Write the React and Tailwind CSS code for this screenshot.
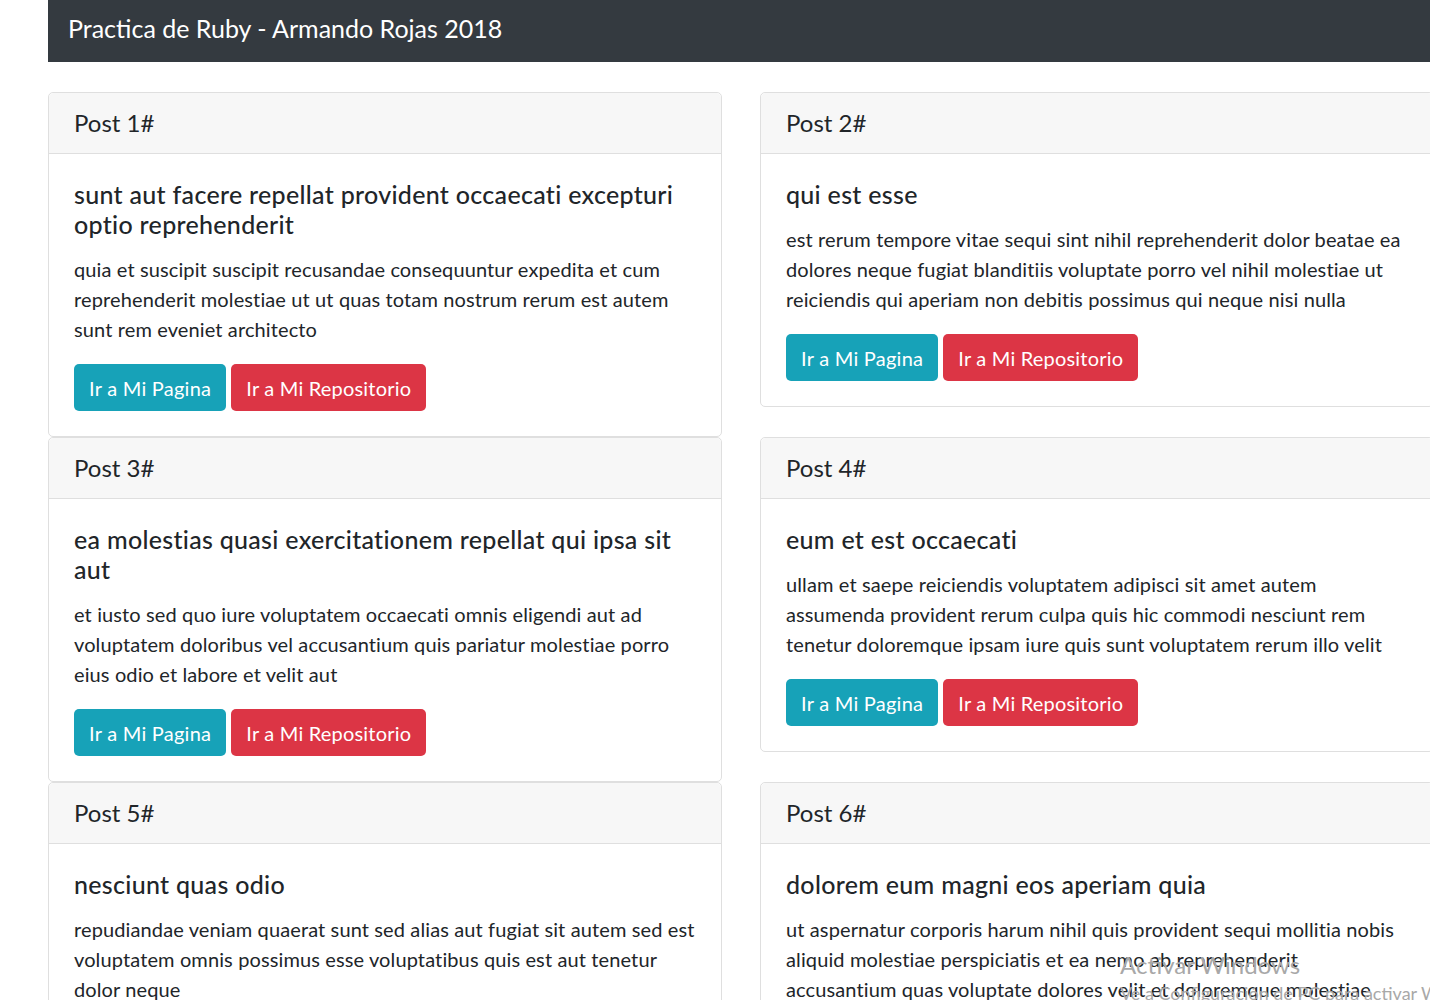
import React from "react";

const posts = [
  {
    id: 1,
    title: "sunt aut facere repellat provident occaecati excepturi optio reprehenderit",
    body: "quia et suscipit suscipit recusandae consequuntur expedita et cum reprehenderit molestiae ut ut quas totam nostrum rerum est autem sunt rem eveniet architecto",
  },
  {
    id: 2,
    title: "qui est esse",
    body: "est rerum tempore vitae sequi sint nihil reprehenderit dolor beatae ea dolores neque fugiat blanditiis voluptate porro vel nihil molestiae ut reiciendis qui aperiam non debitis possimus qui neque nisi nulla",
  },
  {
    id: 3,
    title: "ea molestias quasi exercitationem repellat qui ipsa sit aut",
    body: "et iusto sed quo iure voluptatem occaecati omnis eligendi aut ad voluptatem doloribus vel accusantium quis pariatur molestiae porro eius odio et labore et velit aut",
  },
  {
    id: 4,
    title: "eum et est occaecati",
    body: "ullam et saepe reiciendis voluptatem adipisci sit amet autem assumenda provident rerum culpa quis hic commodi nesciunt rem tenetur doloremque ipsam iure quis sunt voluptatem rerum illo velit",
  },
  {
    id: 5,
    title: "nesciunt quas odio",
    body: "repudiandae veniam quaerat sunt sed alias aut fugiat sit autem sed est voluptatem omnis possimus esse voluptatibus quis est aut tenetur dolor neque",
  },
  {
    id: 6,
    title: "dolorem eum magni eos aperiam quia",
    body: "ut aspernatur corporis harum nihil quis provident sequi mollitia nobis aliquid molestiae perspiciatis et ea nemo ab reprehenderit accusantium quas voluptate dolores velit et doloremque molestiae",
  },
];

function PostCard({ post }) {
  return (
    <div className="border border-[#dfdfdf] rounded-[5px] bg-white">
      {/* header */}
      <div className="bg-[#f7f7f7] border-b border-[#dfdfdf] px-[25px] py-[15px] text-[24px] leading-[30px] rounded-t-[5px]">
        Post {post.id}#
      </div>
      {/* body */}
      <div className="p-[25px]">
        <h5 className="text-[25px] leading-[30px] font-medium tracking-[0.3px] mb-[15px]">{post.title}</h5>
        <p className="text-[20px] leading-[30px] tracking-[0.12px] mb-[20px]">{post.body}</p>
        <div className="flex gap-[5px]">
          <a className="h-[47px] flex items-center bg-[#17a2b8] text-white text-[20px] tracking-[0.25px] px-[15px] rounded-[5px]">
            Ir a Mi Pagina
          </a>
          <a className="h-[47px] flex items-center bg-[#dc3545] text-white text-[20px] tracking-[0.2px] px-[15px] rounded-[5px]">
            Ir a Mi Repositorio
          </a>
        </div>
      </div>
    </div>
  );
}

export default function App() {
  return (
    <div
      className="relative w-[1430px] h-[1000px] overflow-hidden bg-white text-[#212529]"
      style={{ fontFamily: "Lato, 'Open Sans', sans-serif" }}
    >
      <div className="pl-[48px] w-[1500px]">
        <nav className="h-[62px] bg-[#343a40] flex items-center pl-[20px] text-white text-[25px] pb-[5px]">
          Practica de Ruby - Armando Rojas 2018
        </nav>

        <div className="grid grid-cols-[674px_674px] gap-x-[38px] items-start mt-[30px]">
          {posts.map((post) => (
            <PostCard key={post.id} post={post} />
          ))}
        </div>
      </div>

      {/* windows watermark */}
      <div className="absolute left-[1120px] top-[948px] text-[#a8a8a8] whitespace-nowrap">
        <div className="text-[24px] leading-[34px]">Activar Windows</div>
        <div className="text-[18px] leading-[22px]">Ve a Configuración de PC para activar Windows.</div>
      </div>
    </div>
  );
}
